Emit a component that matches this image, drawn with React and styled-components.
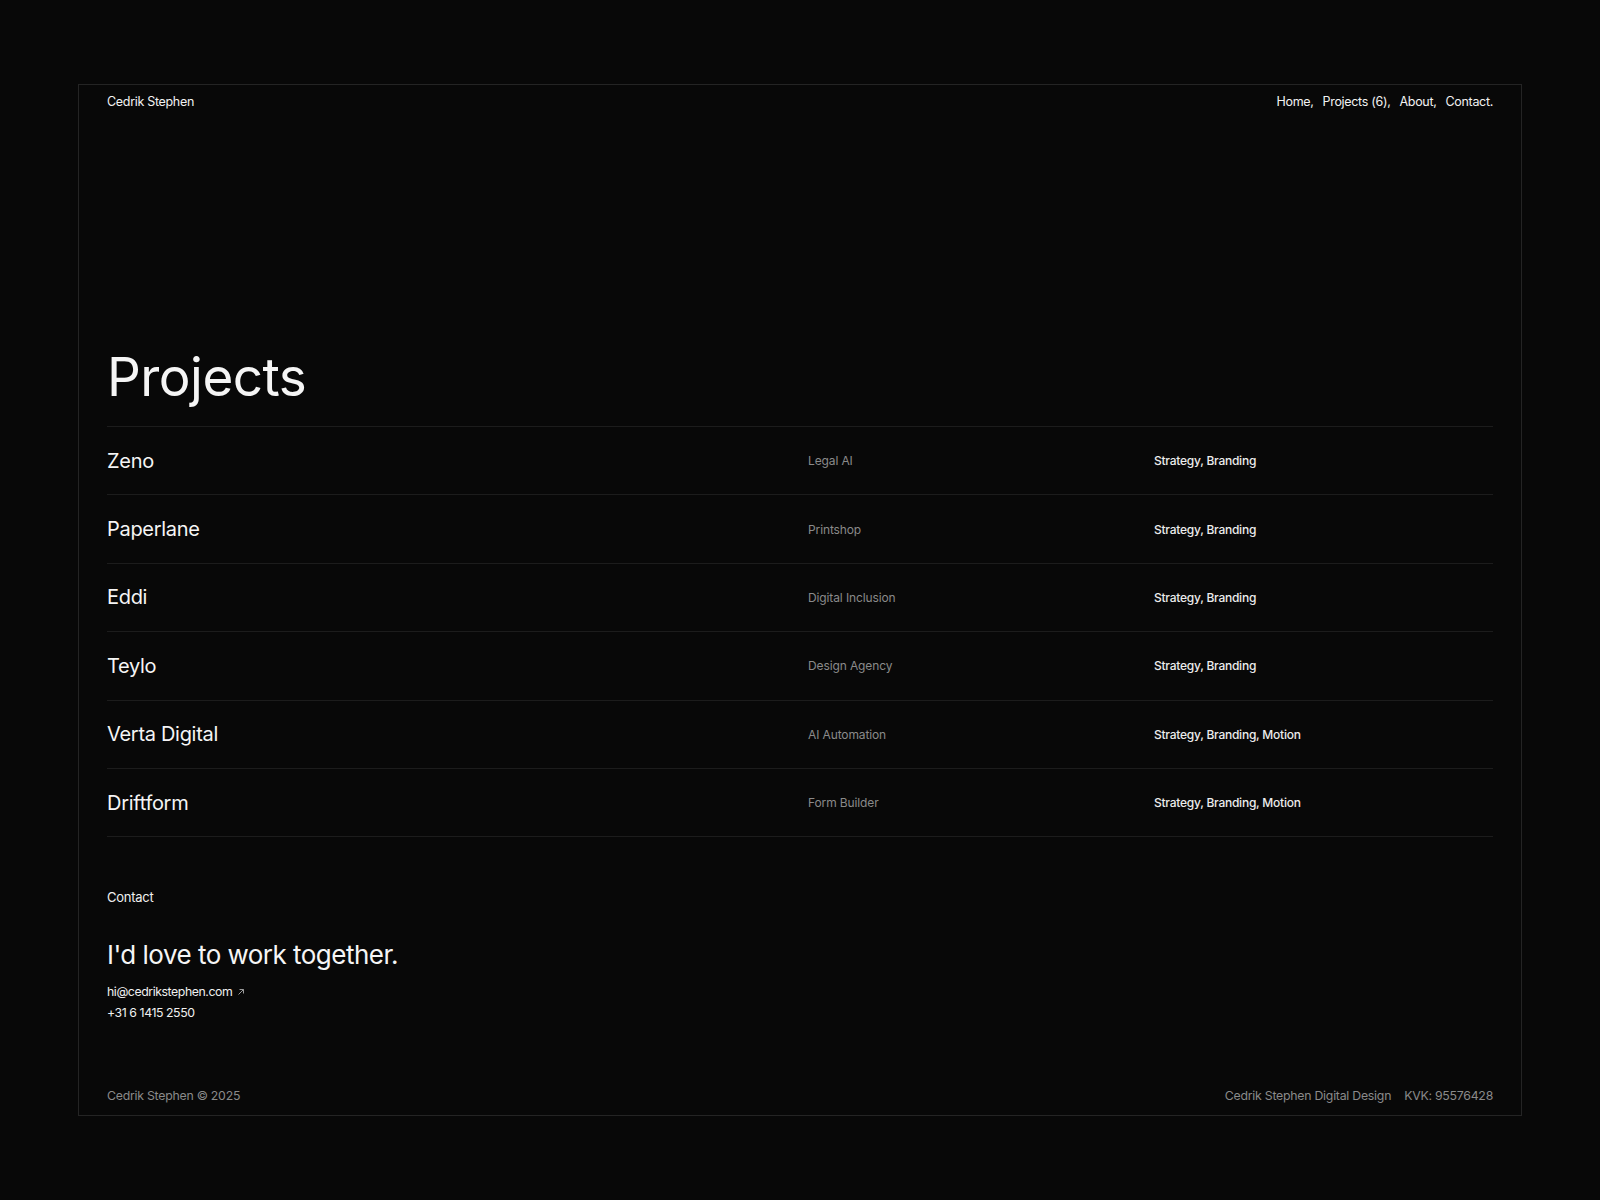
import React from 'react'
import styled, { createGlobalStyle } from 'styled-components'

const GlobalStyle = createGlobalStyle`
  html, body {
    margin: 0;
    padding: 0;
    background: #080808;
  }
  body {
    font-family: Inter, "Noto Sans", Arial, sans-serif;
    color: #f2f2f2;
    -webkit-font-smoothing: antialiased;
  }
`

const Page = styled.div`
  padding: 84px 78px 84px;
  background: #080808;
`

const Frame = styled.div`
  box-sizing: border-box;
  height: 1032px;
  border: 1px solid #242424;
  padding: 9px 28px 11px;
  display: flex;
  flex-direction: column;
`

const Header = styled.header`
  display: flex;
  justify-content: space-between;
  align-items: center;
  font-size: 12.5px;
  line-height: 16px;
  letter-spacing: -0.025em;
`

const Brand = styled.div`
  color: #f2f2f2;
`

const Nav = styled.nav`
  display: flex;
  gap: 9px;
`

const NavLink = styled.a`
  color: #f2f2f2;
  text-decoration: none;
`

const Main = styled.main`
  margin-top: 241px;
`

const Heading = styled.h1`
  margin: 0 0 23px;
  font-size: 53px;
  line-height: 52px;
  font-weight: 400;
  letter-spacing: -0.01em;
  color: #f5f5f5;
`

const List = styled.div`
  border-top: 1px solid #1c1c1c;
`

const Row = styled.div`
  box-sizing: border-box;
  height: 68.4px;
  display: grid;
  grid-template-columns: 701px 346px 1fr;
  align-items: center;
  border-bottom: 1px solid #1c1c1c;
`

const Name = styled.div`
  font-size: 20px;
  letter-spacing: -0.015em;
  color: #f5f5f5;
`

const Category = styled.div`
  font-size: 12px;
  letter-spacing: -0.01em;
  color: #8a8a8a;
`

const Tags = styled.div`
  font-size: 12px;
  font-weight: 500;
  letter-spacing: -0.02em;
  color: #ececec;
`

const Contact = styled.section`
  margin-top: 52px;
`

const Label = styled.div`
  font-size: 13px;
  line-height: 16px;
  letter-spacing: -0.02em;
  color: #f0f0f0;
`

const Tagline = styled.h2`
  margin: 34px 0 11px;
  font-size: 26px;
  line-height: 31px;
  font-weight: 400;
  letter-spacing: -0.02em;
  color: #f5f5f5;
`

const Line = styled.div`
  display: flex;
  align-items: center;
  gap: 5px;
  font-size: 12.3px;
  line-height: 21px;
  letter-spacing: -0.035em;
  color: #f0f0f0;
`

const Footer = styled.footer`
  margin-top: auto;
  display: flex;
  justify-content: space-between;
  font-size: 12.3px;
  line-height: 16px;
  letter-spacing: -0.02em;
  color: #8a8a8a;
`

const FooterRight = styled.div`
  display: flex;
  gap: 13px;
`

const projects = [
  { name: 'Zeno', category: 'Legal AI', tags: 'Strategy, Branding' },
  { name: 'Paperlane', category: 'Printshop', tags: 'Strategy, Branding' },
  { name: 'Eddi', category: 'Digital Inclusion', tags: 'Strategy, Branding' },
  { name: 'Teylo', category: 'Design Agency', tags: 'Strategy, Branding' },
  { name: 'Verta Digital', category: 'AI Automation', tags: 'Strategy, Branding, Motion' },
  { name: 'Driftform', category: 'Form Builder', tags: 'Strategy, Branding, Motion' },
]

const Arrow = () => (
  <svg width="8" height="8" viewBox="0 0 8 8" fill="none" stroke="#9a9a9a" strokeWidth="1">
    <path d="M1.5 6.5 L6.5 1.5 M2.5 1.5 H6.5 V5.5" />
  </svg>
)

const App = () => {
  return (
    <Page>
      <GlobalStyle />
      <Frame>
        <Header>
          <Brand>Cedrik Stephen</Brand>
          <Nav>
            <NavLink href="#">Home,</NavLink>
            <NavLink href="#">Projects (6),</NavLink>
            <NavLink href="#">About,</NavLink>
            <NavLink href="#">Contact.</NavLink>
          </Nav>
        </Header>

        <Main>
          <Heading>Projects</Heading>
          <List>
            {projects.map((p) => (
              <Row key={p.name}>
                <Name>{p.name}</Name>
                <Category>{p.category}</Category>
                <Tags>{p.tags}</Tags>
              </Row>
            ))}
          </List>

          <Contact>
            <Label>Contact</Label>
            <Tagline>I'd love to work together.</Tagline>
            <Line>hi@cedrikstephen.com <Arrow /></Line>
            <Line>+31 6 1415 2550</Line>
          </Contact>
        </Main>

        <Footer>
          <div>Cedrik Stephen © 2025</div>
          <FooterRight>
            <span>Cedrik Stephen Digital Design</span>
            <span>KVK: 95576428</span>
          </FooterRight>
        </Footer>
      </Frame>
    </Page>
  )
}

export default App
